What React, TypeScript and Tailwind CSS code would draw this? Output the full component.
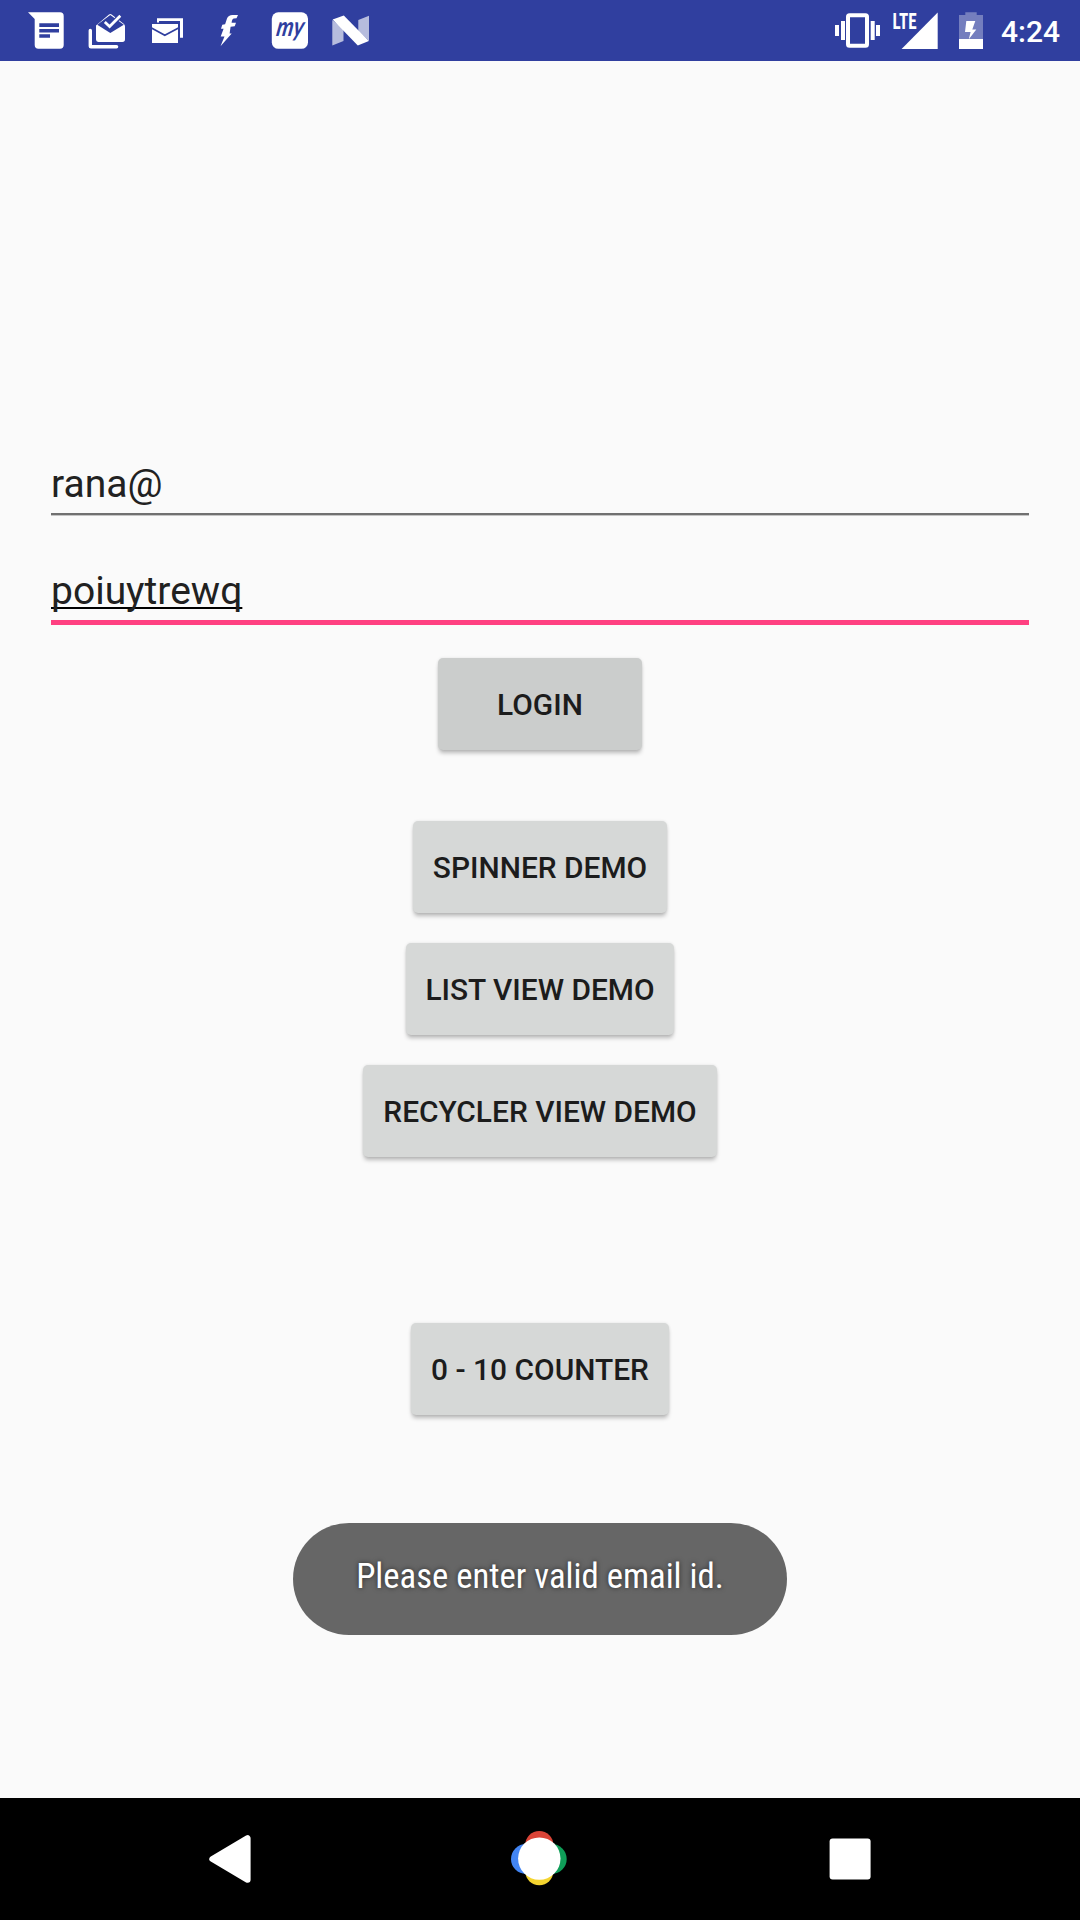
import React from 'react';

function StatusBar() {
  return (
    <header className="flex h-[61px] w-full items-center bg-[#303f9f] pl-6 text-white">
      <svg className="h-[61px] w-[60px]" viewBox="24 0 60 61" fill="white">
        <path d="M28 12.3H60a3.7 3.7 0 0 1 3.7 3.7V45a3.7 3.7 0 0 1-3.7 3.7H38.4a3.7 3.7 0 0 1-3.7-3.7V19Z" />
        <path d="M39.3 23.3H59V27H39.3ZM39.3 29H59V32.4H39.3ZM39.3 34.3H50V37.8H39.3Z" fill="#303f9f" />
      </svg>
      <svg className="h-[61px] w-[60px]" viewBox="84 0 60 61" fill="white">
        <path d="M88.6 30.5a1.6 1.6 0 0 1 3.4 0V45H116.5a1.7 1.7 0 0 1 0 3.6H91a2.4 2.4 0 0 1-2.4-2.4Z" />
        <path d="M96 25.5 109 14.6Q110.3 13.6 111.6 14.6L124 24Q125 25 125 26.5V39.3a2.6 2.6 0 0 1-2.6 2.6H98.3a2.3 2.3 0 0 1-2.3-2.3Z" />
        <path d="M97.2 24.8 110.3 14.9 123.8 24.8 110.3 33Z" fill="#303f9f" />
        <path d="M104.8 22 109.6 26.5 120.3 15.7" fill="none" stroke="#303f9f" strokeWidth="5" />
        <path d="M104.8 22 109.6 26.5 120.3 15.7" fill="none" stroke="white" strokeWidth="2.7" />
      </svg>
      <svg className="h-[61px] w-[60px]" viewBox="144 0 60 61" fill="white">
        <path d="M157 18.2H183V37.7H180V21H159V22.5H157Z" />
        <path d="M152 24H178V43H152Z" />
        <path d="M151.5 28 164.8 35.2 178.5 28" fill="none" stroke="#303f9f" strokeWidth="1.7" />
      </svg>
      <svg className="h-[61px] w-[60px]" viewBox="204 0 60 61" fill="white">
        <path d="M227 18.5Q228.3 15.2 232.5 15H238L236.5 18.3 233.7 18.6Q232 19 231.6 22.8H236L234.7 26.2 230.6 26.8 229.6 33.4H231.7L220.5 46.3 224.5 36.5H220.7L223.6 28.8H221L222.3 24.8 225.1 24.2Z" />
      </svg>
      <svg className="h-[61px] w-[60px]" viewBox="264 0 60 61" fill="white">
        <rect x="271.8" y="12.3" width="36.2" height="36.5" rx="6.5" />
        <text transform="translate(275.6 36) skewX(-10) scale(1 1.22)" fill="#303f9f" textLength="27" lengthAdjust="spacingAndGlyphs" className="font-['Lato',sans-serif] text-[22px] font-bold italic">my</text>
      </svg>
      <svg className="h-[61px] w-[60px]" viewBox="324 0 60 61" fill="white">
        <path d="M332.3 20V45.5L343.5 41V29ZM358.3 20 369 15.7V41L358.3 31Z" opacity=".65" />
        <path d="M332.6 19.4 343.8 15.6 368.8 41 357.8 45.4Z" />
      </svg>
      <svg className="ml-auto h-[61px] w-[60px]" viewBox="828 0 60 61" fill="white">
        <rect x="848" y="15.3" width="19" height="30.4" rx="1.5" fill="none" stroke="white" strokeWidth="4" />
        <path d="M835 25h4v11h-4ZM841 21h4v19h-4ZM870.7 21h4v19h-4ZM876 25h4v11h-4Z" />
      </svg>
      <svg className="h-[61px] w-[60px]" viewBox="888 0 60 61" fill="white">
        <text x="892.5" y="29" textLength="24" lengthAdjust="spacingAndGlyphs" className="font-['Roboto_Condensed',sans-serif] text-[22px] font-bold">LTE</text>
        <path d="M901.6 49H937.7V12.5Z" />
      </svg>
      <svg className="h-[61px] w-[48px]" viewBox="948 0 48 61" fill="white">
        <path d="M965.3 12.3H976.7V15H983V39H959V15H965.3Z" opacity=".33" />
        <path d="M959 39H983V49H959Z" />
        <path d="M966.3 21H975.3L972.3 29.5H976.3L968.8 39.3 970.6 32H965Z" />
      </svg>
      <span className="w-[84px] pt-[2px] pl-[5px] font-['Roboto',sans-serif] text-[30px] leading-[60px] font-medium">4:24</span>
    </header>
  );
}

function DemoButton({ label, className }: { label: string; className: string }) {
  return (
    <button className={`h-[92px] rounded-[5px] text-center text-[29.9px] leading-[94px] font-medium whitespace-nowrap text-[#1c1c1c] shadow-[0_4px_4px_-1px_rgba(0,0,0,0.26),0_0_3px_rgba(0,0,0,0.1)] ${className}`}>
      {label}
    </button>
  );
}

function NavBar() {
  return (
    <nav className="grid h-[122px] grid-cols-3 items-center justify-items-center bg-black px-[75px]">
      <svg className="h-[60px] w-[60px]" viewBox="0 0 60 60" fill="white" stroke="white" strokeWidth="6" strokeLinejoin="round">
        <path d="M12.3 30 47.6 9.2V50.8Z" />
      </svg>
      <svg className="h-[60px] w-[60px]" viewBox="0 0 60 60">
        <circle cx="16" cy="30" r="15" fill="#4285f4" />
        <circle cx="41.7" cy="30" r="15" fill="#0f9d58" />
        <circle cx="29.3" cy="16" r="14" fill="#db4437" />
        <circle cx="29.3" cy="42.3" r="14" fill="#f4d42f" />
        <circle cx="29.3" cy="29.6" r="21.2" fill="white" />
      </svg>
      <svg className="h-[60px] w-[60px]" viewBox="0 0 60 60" fill="white">
        <rect x="9.6" y="9.6" width="41" height="41" rx="3" />
      </svg>
    </nav>
  );
}

export default function App() {
  return (
    <div className="flex h-[1920px] w-[1080px] flex-col overflow-hidden bg-[#fafafa] font-['Roboto',sans-serif] text-[#212121]">
      <StatusBar />
      <main className="flex h-[1737px] flex-col items-center pt-[403px]">
        <div className="h-[51px] w-[978px] border-b-2 border-[#707070] text-[39px] leading-10 shadow-[0_1px_0_#c4c4c4]">rana@</div>
        <div className="mt-[56px] h-[54px] w-[978px] border-b-[5px] border-[#ff4081] text-[39px] leading-10">
          <span className="underline decoration-black decoration-2 underline-offset-[3px] [text-decoration-skip-ink:none]">poiuytrewq</span>
        </div>
        <DemoButton label="LOGIN" className="mt-[33px] w-[204px] bg-[#cbcdcc]" />
        <DemoButton label="SPINNER DEMO" className="mt-[71px] w-[254px] bg-[#d6d8d7]" />
        <DemoButton label="LIST VIEW DEMO" className="mt-[30px] w-[268px] bg-[#d6d8d7]" />
        <DemoButton label="RECYCLER VIEW DEMO" className="mt-[30px] w-[354px] bg-[#d6d8d7]" />
        <DemoButton label="0 - 10 COUNTER" className="mt-[166px] w-[258px] bg-[#d6d8d7]" />
        <div className="mt-[108px] h-[112px] w-[494px] rounded-full bg-[#666666] text-center font-['Roboto_Condensed','Roboto',sans-serif] text-[34.7px] leading-[106px] text-white [text-shadow:0_0_5px_rgba(0,0,0,0.6)]">
          Please enter valid email id.
        </div>
      </main>
      <NavBar />
    </div>
  );
}
